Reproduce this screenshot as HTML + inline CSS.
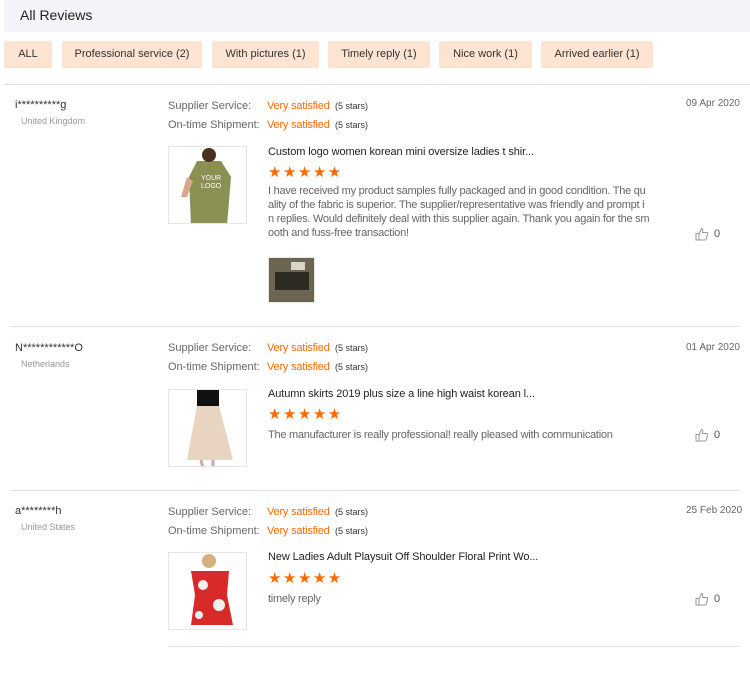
<!DOCTYPE html>
<html><head><meta charset="utf-8"><style>
*{margin:0;padding:0;box-sizing:border-box}
body{width:750px;height:674px;background:#fff;font-family:"Liberation Sans",Arial,sans-serif;color:#333;position:relative;overflow:hidden}
.a{position:absolute;white-space:nowrap}
.hdr{position:absolute;left:4px;top:0;width:746px;height:32px;background:#f3f4f7}
.chip{position:absolute;top:41px;height:27px;background:#fde3d2;border-radius:2px;font-size:11px;line-height:27px;text-align:center;color:#333}
.line{position:absolute;height:1px;background:#e3e3e3}
.lab{font-size:11px;color:#666}
.sat{font-size:11px;color:#ff6a00;letter-spacing:-0.2px}
.st{font-size:9px;color:#333}
.name{font-size:11px;color:#333}
.cty{font-size:9px;color:#999}
.date{font-size:10px;color:#666}
.title{font-size:11px;color:#222;letter-spacing:-0.1px}
.txt{font-size:11px;color:#666;line-height:14px;white-space:normal;width:382px;word-break:break-all;letter-spacing:-0.25px}
.stars{font-size:15px;color:#ff6a00;letter-spacing:1.5px;line-height:17px}
.img{position:absolute;border:1px solid #e6e6e6;background:#fff;overflow:hidden}
.th{font-size:11px;color:#555}
</style></head><body>
<div class="hdr"></div>
<div class="a" style="left:20px;top:7px;font-size:14px;color:#222">All Reviews</div>
<div class="chip" style="left:4px;width:48px">ALL</div>
<div class="chip" style="left:62px;width:140px">Professional service (2)</div>
<div class="chip" style="left:212px;width:107px">With pictures (1)</div>
<div class="chip" style="left:328px;width:102px">Timely reply (1)</div>
<div class="chip" style="left:439px;width:93px">Nice work (1)</div>
<div class="chip" style="left:541px;width:112px">Arrived earlier (1)</div>
<div class="line" style="left:4px;top:84px;width:746px"></div>

<!-- R1 -->
<div class="a name" style="left:15px;top:99px">i**********g</div>
<div class="a cty" style="left:21px;top:116px">United Kingdom</div>
<div class="a lab" style="left:168px;top:100px">Supplier Service:</div>
<div class="a sat" style="left:267px;top:100px">Very satisfied</div>
<div class="a st" style="left:335px;top:101px">(5 stars)</div>
<div class="a lab" style="left:168px;top:119px">On-time Shipment:</div>
<div class="a sat" style="left:267px;top:119px">Very satisfied</div>
<div class="a st" style="left:335px;top:120px">(5 stars)</div>
<div class="a date" style="left:686px;top:98px">09 Apr 2020</div>
<div class="img" style="left:168px;top:146px;width:79px;height:78px"><svg width="79" height="78"><path d="M22 78 L20 30 L28 14 L52 14 L62 30 L58 78Z" fill="#8a8f52"/><circle cx="40" cy="8" r="7" fill="#4a3020"/><path d="M18 30 L12 50 L18 50 L24 34Z" fill="#d8a88a"/><text x="32" y="33" font-size="7" fill="#fff" font-family="Liberation Sans">YOUR</text><text x="32" y="41" font-size="7" fill="#fff" font-family="Liberation Sans">LOGO</text></svg></div>
<div class="a title" style="left:268px;top:146px">Custom logo women korean mini oversize ladies t shir...</div>
<div class="a stars" style="left:268px;top:164px">★★★★★</div>
<div class="a txt" style="left:268px;top:184px">I have received my product samples fully packaged and in good condition. The quality of the fabric is superior. The supplier/representative was friendly and prompt in replies. Would definitely deal with this supplier again. Thank you again for the smooth and fuss-free transaction!</div>
<div class="img" style="left:268px;top:257px;width:47px;height:46px;background:#6b6450"><div style="position:absolute;left:6px;top:14px;width:34px;height:18px;background:#2d2a22"></div><div style="position:absolute;left:22px;top:4px;width:14px;height:8px;background:#d8d4c8"></div></div>
<svg class="a" style="left:695px;top:227px" width="14" height="14" viewBox="0 0 14 14"><path d="M1 6.5h3v6.5H1z M4 7 L6.5 1.5 Q8 1.5 7.8 3.5 L7.5 5.5 H12 Q13 5.8 12.6 7 L11.3 12 Q11 13 10 13 H4" fill="none" stroke="#999" stroke-width="1"/></svg>
<div class="a th" style="left:714px;top:228px">0</div>
<div class="line" style="left:10px;top:326px;width:730px"></div>

<!-- R2 -->
<div class="a name" style="left:15px;top:342px">N************O</div>
<div class="a cty" style="left:21px;top:359px">Netherlands</div>
<div class="a lab" style="left:168px;top:342px">Supplier Service:</div>
<div class="a sat" style="left:267px;top:342px">Very satisfied</div>
<div class="a st" style="left:335px;top:343px">(5 stars)</div>
<div class="a lab" style="left:168px;top:361px">On-time Shipment:</div>
<div class="a sat" style="left:267px;top:361px">Very satisfied</div>
<div class="a st" style="left:335px;top:362px">(5 stars)</div>
<div class="a date" style="left:686px;top:342px">01 Apr 2020</div>
<div class="img" style="left:168px;top:389px;width:79px;height:78px"><svg width="79" height="78"><rect x="28" y="0" width="22" height="16" fill="#111"/><path d="M28 16 L50 16 L64 70 L18 70Z" fill="#e8d4c0"/><path d="M32 70 L34 78 M44 70 L44 78" stroke="#caa" stroke-width="3"/></svg></div>
<div class="a title" style="left:268px;top:388px">Autumn skirts 2019 plus size a line high waist korean l...</div>
<div class="a stars" style="left:268px;top:406px">★★★★★</div>
<div class="a txt" style="left:268px;top:428px">The manufacturer is really professional! really pleased with communication</div>
<svg class="a" style="left:695px;top:428px" width="14" height="14" viewBox="0 0 14 14"><path d="M1 6.5h3v6.5H1z M4 7 L6.5 1.5 Q8 1.5 7.8 3.5 L7.5 5.5 H12 Q13 5.8 12.6 7 L11.3 12 Q11 13 10 13 H4" fill="none" stroke="#999" stroke-width="1"/></svg>
<div class="a th" style="left:714px;top:429px">0</div>
<div class="line" style="left:10px;top:490px;width:730px"></div>

<!-- R3 -->
<div class="a name" style="left:15px;top:505px">a********h</div>
<div class="a cty" style="left:21px;top:522px">United States</div>
<div class="a lab" style="left:168px;top:506px">Supplier Service:</div>
<div class="a sat" style="left:267px;top:506px">Very satisfied</div>
<div class="a st" style="left:335px;top:507px">(5 stars)</div>
<div class="a lab" style="left:168px;top:525px">On-time Shipment:</div>
<div class="a sat" style="left:267px;top:525px">Very satisfied</div>
<div class="a st" style="left:335px;top:526px">(5 stars)</div>
<div class="a date" style="left:686px;top:505px">25 Feb 2020</div>
<div class="img" style="left:168px;top:552px;width:79px;height:78px"><svg width="79" height="78"><circle cx="40" cy="8" r="7" fill="#d8b080"/><path d="M22 18 L60 18 L58 42 L64 72 L22 72 L26 42Z" fill="#d92a2a"/><circle cx="34" cy="32" r="5" fill="#eee"/><circle cx="50" cy="52" r="6" fill="#eee"/><circle cx="30" cy="62" r="4" fill="#eee"/></svg></div>
<div class="a title" style="left:268px;top:551px">New Ladies Adult Playsuit Off Shoulder Floral Print Wo...</div>
<div class="a stars" style="left:268px;top:570px">★★★★★</div>
<div class="a txt" style="left:268px;top:592px">timely reply</div>
<svg class="a" style="left:695px;top:592px" width="14" height="14" viewBox="0 0 14 14"><path d="M1 6.5h3v6.5H1z M4 7 L6.5 1.5 Q8 1.5 7.8 3.5 L7.5 5.5 H12 Q13 5.8 12.6 7 L11.3 12 Q11 13 10 13 H4" fill="none" stroke="#999" stroke-width="1"/></svg>
<div class="a th" style="left:714px;top:593px">0</div>
<div class="line" style="left:168px;top:646px;width:572px"></div>
</body></html>
